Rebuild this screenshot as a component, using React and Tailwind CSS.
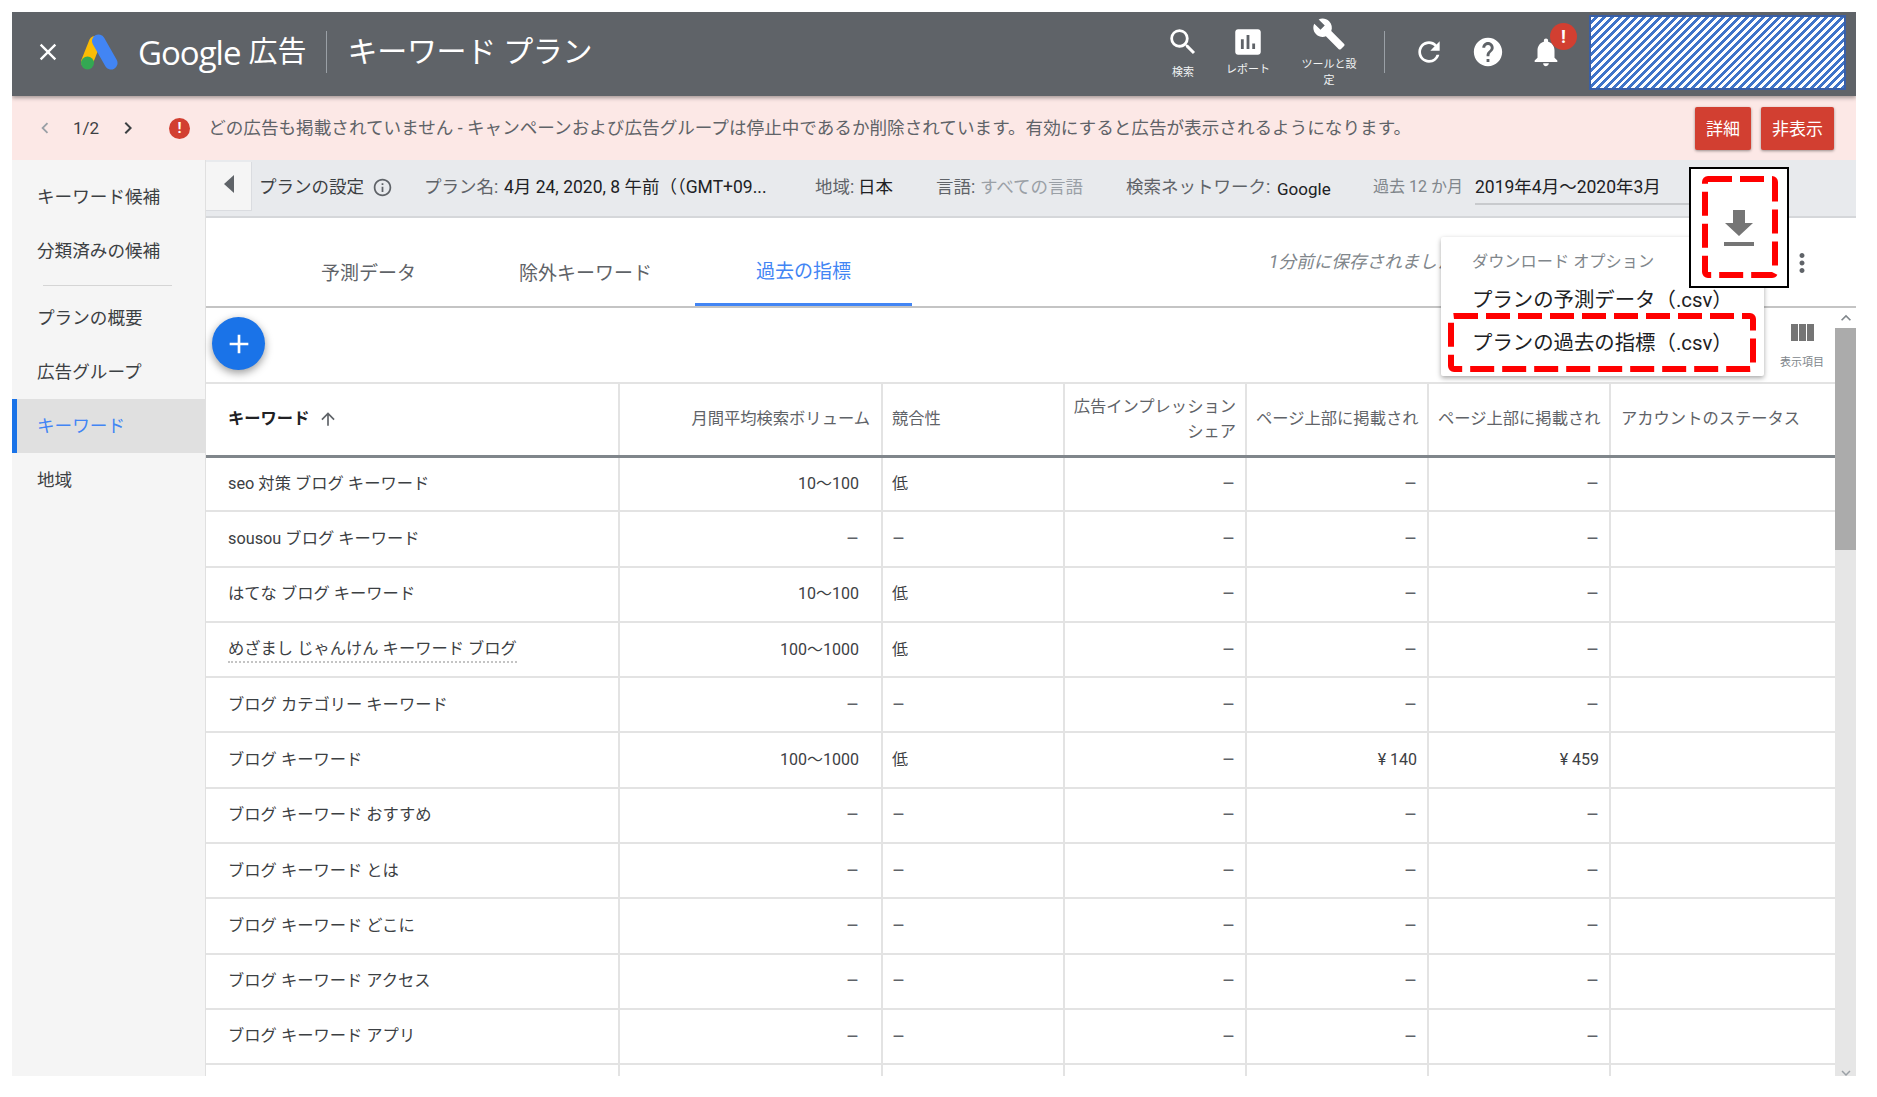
import React from "react";
import {
  MdClose, MdChevronLeft, MdChevronRight, MdSearch, MdAssessment, MdBuild, MdRefresh, MdHelp,
  MdNotifications, MdInfoOutline, MdAdd, MdArrowUpward, MdMoreVert,
  MdKeyboardArrowUp, MdKeyboardArrowDown,
} from "react-icons/md";

const rows = [
  ["seo 対策 ブログ キーワード", "10～100", "低", "–", "–", "–"],
  ["sousou ブログ キーワード", "–", "–", "–", "–", "–"],
  ["はてな ブログ キーワード", "10～100", "低", "–", "–", "–"],
  ["めざまし じゃんけん キーワード ブログ", "100～1000", "低", "–", "–", "–"],
  ["ブログ カテゴリー キーワード", "–", "–", "–", "–", "–"],
  ["ブログ キーワード", "100～1000", "低", "–", "¥ 140", "¥ 459"],
  ["ブログ キーワード おすすめ", "–", "–", "–", "–", "–"],
  ["ブログ キーワード とは", "–", "–", "–", "–", "–"],
  ["ブログ キーワード どこに", "–", "–", "–", "–", "–"],
  ["ブログ キーワード アクセス", "–", "–", "–", "–", "–"],
  ["ブログ キーワード アプリ", "–", "–", "–", "–", "–"],
  ["", "", "", "", "", ""],
];

const side = ["キーワード候補", "分類済みの候補"];
const side2 = ["プランの概要", "広告グループ"];

function Cell({ v }) {
  return v === "–" ? <span className="text-[20px] leading-none align-[-2px] text-[#5f6368]">–</span> : <>{v}</>;
}

function GoogleAdsLogo() {
  return (
    <svg width="38" height="36" viewBox="0 0 38 36" className="shrink-0">
      <line x1="14" y1="8" x2="6" y2="28" stroke="#fbbc04" strokeWidth="12" strokeLinecap="round" />
      <line x1="17.5" y1="7" x2="30" y2="29" stroke="#4285f4" strokeWidth="13" strokeLinecap="round" />
      <circle cx="6.5" cy="29" r="6.5" fill="#34a853" />
    </svg>
  );
}

function NavIcon({ label, icon, w }) {
  return (
    <div className={`flex flex-col items-center text-white ${w}`}>
      {icon}
      <span className="text-[11px] leading-[16px] text-center text-[#f1f3f4]">{label}</span>
    </div>
  );
}

function DashedBox({ w, h, cls }) {
  return (
    <svg width={w} height={h} className={`absolute ${cls}`}>
      <rect x="3" y="3" width={w - 6} height={h - 6} rx="3" fill="none" stroke="#ff0000" strokeWidth="6" strokeDasharray="24 8" />
    </svg>
  );
}

export default function App() {
  return (
    <div className="relative w-[1877px] h-[1097px] bg-white pl-3 pt-3 overflow-hidden text-[#3c4043] font-['Roboto','Noto_Sans_CJK_JP',sans-serif]">
      <div className="relative w-[1844px] h-[1064px] flex flex-col overflow-hidden">
        {/* header */}
        <header className="h-[84px] shrink-0 bg-[#5f6368] flex items-center pb-[4px] text-white shadow-[0_2px_4px_rgba(0,0,0,0.35)] z-10">
          <MdClose className="ml-[22px] text-[28px] shrink-0" />
          <div className="ml-[19px]"><GoogleAdsLogo /></div>
          <span className="ml-[19px] text-[33px] font-medium tracking-[-1px] leading-none font-['Open_Sans','Roboto',sans-serif]">Google</span>
          <span className="ml-[8px] text-[29px] leading-none">広告</span>
          <div className="ml-[19px] w-px h-[42px] bg-[#9aa0a6]" />
          <span className="ml-[21px] text-[30px] leading-none tracking-[-0.3px]">キーワード プラン</span>
          <div className="flex-1" />
          <div className="flex items-start self-start pt-[13px]">
            <NavIcon w="w-[60px]" label="検索" icon={<MdSearch className="text-[34px] h-[34px] mb-[6px]" />} />
            <NavIcon w="w-[60px] ml-[5px]" label="レポート" icon={<MdAssessment className="text-[34px] h-[34px] mb-[3px]" />} />
            <div className="ml-[23px]">
              <NavIcon w="w-[56px]" label="ツールと設定" icon={<MdBuild className="text-[34px] h-[34px] -mt-[8px] mb-[6px]" />} />
            </div>
          </div>
          <div className="ml-[27px] w-px h-[42px] bg-[#9aa0a6]" />
          <MdRefresh className="ml-[28px] text-[32px] shrink-0" />
          <MdHelp className="ml-[26px] text-[34px] shrink-0" />
          <div className="relative ml-[24px] shrink-0">
            <MdNotifications className="text-[34px]" />
            <span className="absolute -right-[14px] -top-[12px] w-[27px] h-[27px] rounded-full bg-[#d23f31] flex items-center justify-center text-[18px] font-bold leading-none">!</span>
          </div>
          <div className="ml-[26px] mr-[10px] w-[257px] h-[75px] border-2 border-[#3a5fa5] bg-[repeating-linear-gradient(135deg,#ffffff_0px,#ffffff_2.8px,#3f74c9_2.8px,#3f74c9_5.6px)]" />
        </header>

        {/* banner */}
        <div className="h-[64px] shrink-0 bg-[#fce8e6] flex items-center">
          <MdChevronLeft className="ml-[22px] text-[22px] text-[#9aa0a6] shrink-0" />
          <span className="ml-[17px] text-[17px] leading-none">1/2</span>
          <MdChevronRight className="ml-[17px] text-[24px] text-[#3c4043] shrink-0" />
          <span className="ml-[29px] w-[21px] h-[21px] rounded-full bg-[#d23f31] text-white flex items-center justify-center text-[15px] font-bold leading-none shrink-0">!</span>
          <span className="ml-[18px] text-[17.6px] text-[#5f6368] whitespace-nowrap w-[1196px]">どの広告も掲載されていません - キャンペーンおよび広告グループは停止中であるか削除されています。有効にすると広告が表示されるようになります。</span>
          <div className="flex-1" />
          <button className="w-[56px] h-[43px] pt-[3px] rounded-[2px] bg-[#d23f31] text-white text-[17px] shadow-[0_1px_3px_rgba(0,0,0,0.4)]">詳細</button>
          <button className="ml-[10px] mr-[22px] w-[73px] h-[43px] pt-[3px] rounded-[2px] bg-[#d23f31] text-white text-[17px] shadow-[0_1px_3px_rgba(0,0,0,0.4)]">非表示</button>
        </div>

        {/* body */}
        <div className="flex-1 flex min-h-0">
          <aside className="w-[193px] shrink-0 bg-[#f5f5f5] pt-[10px] text-[17.6px] text-[#3c4043]">
            {side.map((t) => (
              <div key={t} className="h-[54px] flex items-center pl-[25px]">{t}</div>
            ))}
            <div className="ml-[31px] w-[129px] h-px bg-[#d5d5d5] mt-[7px] mb-[5px]" />
            {side2.map((t) => (
              <div key={t} className="h-[54px] flex items-center pl-[25px]">{t}</div>
            ))}
            <div className="h-[54px] flex items-center pl-[20px] bg-[#e0e0e0] border-l-[5px] border-[#1a73e8] text-[#4285f4]">キーワード</div>
            <div className="h-[54px] flex items-center pl-[25px]">地域</div>
          </aside>

          <main className="flex-1 flex flex-col min-w-0 border-l border-[#e0e0e0]">
            {/* settings bar */}
            <div className="h-[58px] shrink-0 bg-[#e8eaed] border-b-2 border-[#d5d7da] flex items-start text-[17.5px] whitespace-nowrap">
              <div className="w-[46px] h-[49px] mt-[2px] bg-[#f5f5f5] border-r border-b border-[#dadce0] flex items-center justify-center shrink-0">
                <span className="block w-0 h-0 border-y-[9px] border-y-transparent border-r-[10px] border-r-[#5f6368] -mt-[4px]" />
              </div>
              <div className="flex items-center h-[54px]">
                <span className="ml-[7px] w-[106px]">プランの設定</span>
                <MdInfoOutline className="ml-[7px] text-[21px] text-[#5f6368] shrink-0" />
                <span className="ml-[31px] w-[75px] text-[#5f6368]">プラン名:</span>
                <span className="ml-[5px] text-[#202124] w-[269px] overflow-hidden">4月 24, 2020, 8 午前（（GMT+09...</span>
                <span className="ml-[42px] text-[#5f6368] w-[40px]">地域:</span>
                <span className="ml-[3px] text-[#202124] w-[35px]">日本</span>
                <span className="ml-[43px] text-[#5f6368] w-[40px]">言語:</span>
                <span className="ml-[4px] text-[#9aa0a6] w-[105px]">すべての言語</span>
                <span className="ml-[41px] text-[#5f6368] w-[145px]">検索ネットワーク:</span>
                <span className="ml-[6px] text-[#202124] w-[55px] mt-[5px] text-[17px]">Google</span>
                <span className="ml-[41px] text-[#80868b] text-[16px] w-[90px]">過去 12 か月</span>
                <span className="ml-[12px] text-[#202124] border-b-2 border-[#c8cacd] w-[240px] h-[32px] leading-[28px] mt-[4px]">2019年4月～2020年3月</span>
              </div>
            </div>

            {/* tabs */}
            <div className="h-[90px] shrink-0 bg-white border-b-2 border-[#c4c4c4] flex items-start text-[19px] text-[#5f6368] whitespace-nowrap">
              <span className="ml-[115px] w-[95px] h-[88px] pt-[24px] flex items-center">予測データ</span>
              <span className="ml-[103px] w-[133px] h-[88px] pt-[24px] flex items-center">除外キーワード</span>
              <span className="ml-[43px] w-[217px] h-[88px] pt-[24px] flex items-center justify-center text-[#4285f4] border-b-[3px] border-[#4285f4]">過去の指標</span>
              <span className="ml-[357px] mt-[31px] text-[17.6px] italic text-[#80868b]">1分前に保存されました</span>
            </div>

            {/* table area */}
            <div className="flex-1 flex min-h-0">
              <div className="flex-1 min-w-0 flex flex-col">
                <div className="h-[74px] shrink-0 flex items-center justify-between">
                  <button className="ml-[6px] mb-[3px] w-[53px] h-[53px] rounded-full bg-[#1a73e8] text-white flex items-center justify-center shadow-[0_3px_8px_rgba(0,0,0,0.4)]">
                    <MdAdd className="text-[32px]" />
                  </button>
                  <div className="flex flex-col items-center mr-[11px] mt-[4px] text-[#80868b]">
                    <svg width="23" height="17" viewBox="0 0 23 17">
                      <rect x="0" y="0" width="7" height="17" fill="#757575" />
                      <rect x="8" y="0" width="7" height="17" fill="#757575" />
                      <rect x="16" y="0" width="7" height="17" fill="#757575" />
                    </svg>
                    <span className="text-[11px] leading-[16px] mt-[14px]">表示項目</span>
                  </div>
                </div>
                <table className="table-fixed w-[1629px] border-collapse text-[16px] text-[#3c4043]">
                  <colgroup>
                    <col className="w-[413px]" />
                    <col className="w-[263px]" />
                    <col className="w-[182px]" />
                    <col className="w-[182px]" />
                    <col className="w-[182px]" />
                    <col className="w-[182px]" />
                    <col className="w-[225px]" />
                  </colgroup>
                  <thead>
                    <tr className="h-[73px] text-[#5f6368] text-[16.3px] font-normal">
                      <th className="border-t-2 border-b-[3px] border-t-[#e3e3e3] border-b-[#80868b] pl-[22px] text-left font-bold text-[#202124]">
                        <span className="inline-flex items-center">キーワード<MdArrowUpward className="ml-[9px] text-[20px] text-[#5f6368]" /></span>
                      </th>
                      <th className="border-t-2 border-b-[3px] border-l-2 border-t-[#e3e3e3] border-b-[#80868b] border-l-[#e3e3e3] pr-[11px] text-right font-normal">月間平均検索ボリューム</th>
                      <th className="border-t-2 border-b-[3px] border-l-2 border-t-[#e3e3e3] border-b-[#80868b] border-l-[#e3e3e3] pl-[9px] text-left font-normal">競合性</th>
                      <th className="border-t-2 border-b-[3px] border-l-2 border-t-[#e3e3e3] border-b-[#80868b] border-l-[#e3e3e3] pr-[9px] text-right font-normal leading-[25px]">広告インプレッション<br />シェア</th>
                      <th className="border-t-2 border-b-[3px] border-l-2 border-t-[#e3e3e3] border-b-[#80868b] border-l-[#e3e3e3] pl-[9px] text-left font-normal whitespace-nowrap">ページ上部に掲載され</th>
                      <th className="border-t-2 border-b-[3px] border-l-2 border-t-[#e3e3e3] border-b-[#80868b] border-l-[#e3e3e3] pl-[9px] text-left font-normal whitespace-nowrap">ページ上部に掲載され</th>
                      <th className="border-t-2 border-b-[3px] border-l-2 border-t-[#e3e3e3] border-b-[#80868b] border-l-[#e3e3e3] pl-[10px] text-left font-normal whitespace-nowrap">アカウントのステータス</th>
                    </tr>
                  </thead>
                  <tbody>
                    {rows.map((r, i) => (
                      <tr key={i} className="h-[55.3px] border-b-2 border-[#e3e3e3]">
                        <td className="pl-[22px] text-[16.3px]">
                          <span className={i === 3 ? "border-b-2 border-dotted border-[#c4c4c4] pb-[3px]" : ""}>{r[0]}</span>
                        </td>
                        <td className="border-l-2 border-[#e3e3e3] pr-[22px] text-right"><Cell v={r[1]} /></td>
                        <td className="border-l-2 border-[#e3e3e3] pl-[9px]"><Cell v={r[2]} /></td>
                        <td className="border-l-2 border-[#e3e3e3] pr-[10px] text-right"><Cell v={r[3]} /></td>
                        <td className="border-l-2 border-[#e3e3e3] pr-[10px] text-right"><Cell v={r[4]} /></td>
                        <td className="border-l-2 border-[#e3e3e3] pr-[10px] text-right"><Cell v={r[5]} /></td>
                        <td className="border-l-2 border-[#e3e3e3]"></td>
                      </tr>
                    ))}
                  </tbody>
                </table>
              </div>
              {/* scrollbar */}
              <div className="w-[21px] shrink-0 bg-[#e6e6e6] flex flex-col items-center">
                <div className="h-[20px] w-full bg-white flex items-center justify-center"><MdKeyboardArrowUp className="text-[20px] text-[#80868b]" /></div>
                <div className="h-[222px] w-full bg-[#ababab]" />
                <div className="flex-1" />
                <MdKeyboardArrowDown className="text-[18px] text-[#9aa0a6] -mb-[6px]" />
              </div>
            </div>
          </main>
        </div>

        {/* dropdown menu */}
        <div className="absolute left-[1429px] top-[225px] w-[323px] h-[139px] bg-white shadow-[0_2px_5px_rgba(0,0,0,0.35)] rounded-[2px] z-20 pl-[31px] pt-[13px]">
          <div className="text-[16.2px] text-[#80868b] leading-[24px]">ダウンロード オプション</div>
          <div className="text-[20.4px] text-[#202124] leading-[30px] mt-[11px] whitespace-nowrap">プランの予測データ（.csv）</div>
          <div className="text-[20.4px] text-[#202124] leading-[30px] mt-[13px] whitespace-nowrap">プランの過去の指標（.csv）</div>
        </div>
        <div className="absolute left-[1436px] top-[301px] w-[308px] h-[59px] z-30"><DashedBox w={308} h={59} cls="left-0 top-0" /></div>

        {/* download callout */}
        <div className="absolute left-[1677px] top-[155px] w-[100px] h-[121px] bg-white border-2 border-black z-30 flex items-center justify-center">
          <DashedBox w={76} h={102} cls="left-[11px] top-[7px]" />
          <svg width="30" height="36" viewBox="0 0 30 36">
            <path d="M9 0h12v13h8L15 26 1 13h8z" fill="#757575" />
            <rect x="0" y="32" width="30" height="4" fill="#757575" />
          </svg>
        </div>
        <MdMoreVert className="absolute left-[1775px] top-[236px] text-[30px] text-[#5f6368] z-20" />
      </div>
    </div>
  );
}
